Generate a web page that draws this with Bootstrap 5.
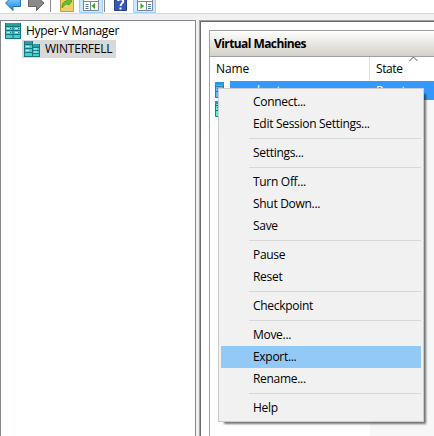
<!DOCTYPE html>
<html lang="en">
<head>
<meta charset="utf-8">
<title>Hyper-V Manager</title>
<link href="https://cdn.jsdelivr.net/npm/bootstrap@5.3.0/dist/css/bootstrap.min.css" rel="stylesheet">
<style>
body{width:434px;height:436px;background:#f0f0f0;color:#000;font:12px/18px "Open Sans","Noto Sans",sans-serif;letter-spacing:-.3px}
svg{display:block;flex:none}
.toolbar{height:14px;background:#fff;border-bottom:1px solid #d9d9d9}
.workspace{height:416px;margin-top:6px}
.tree{width:196px;border:1px solid #828790;border-bottom:0;padding:1px 0 0 4px}
.tree-row{height:18px;line-height:17px}
.tree-row svg{margin-top:1px}
.host{margin-left:17px;width:94px;padding-left:2px}
.tree-label{padding-left:5px}
.host .tree-label{letter-spacing:-.22px}
.picked{background:#d9d9d9}
.main-pane{margin-left:3px;border-left:1px solid #a0a0a0;border-top:1px solid #a0a0a0;padding:9px 0 0 9px;box-shadow:inset 1px 1px #696969}
.vm{border-left:1px solid #a0a0a0;border-top:1px solid #a0a0a0}
.vm-title{height:26px;border-bottom:1px solid #a0a0a0;background:linear-gradient(#fff,#d4d0c8);padding-left:4px;line-height:25px;letter-spacing:-.58px}
.cols{height:24px;line-height:24px;letter-spacing:-.1px}
.name-col{width:160px;border-right:1px solid #e0e0e0;padding-left:6px}
.state-col{padding-left:6px;letter-spacing:-.4px}
.vm-row{height:19px}
.ico{width:20px;padding:1px 0 0 5px}
.sel{background:#3399ff;color:#fff;line-height:19px}
.sel-name{width:140px;padding-left:7px}
.sel-state{padding-left:6px}
.rest-name{width:160px;padding:1px 0 0 5px}
.rest{background:#f7f7f7}
.menu{position:absolute;left:218px;top:88px;width:206px;height:334px;background:#f1f1f1;border:1px solid #ccc;padding:2px;box-shadow:4px 4px 2px -2px rgba(0,0,0,.55)}
.cmd{height:22px;line-height:21px;padding-left:32px;white-space:nowrap}
.hot{background:#91c9f7}
.rule{height:1px;margin:3px 0 3px 28px;background:#d7d7d7}
.sort{position:absolute;left:409px;top:56px}
</style>
<script src="https://cdn.jsdelivr.net/npm/bootstrap@5.3.0/dist/js/bootstrap.bundle.min.js"></script>
</head>
<body class="overflow-hidden position-relative">
<div class="toolbar overflow-hidden">
<svg width="170" height="13">
<defs><linearGradient id="blue" x2="0" y2="1"><stop stop-color="#8fd6ff"/><stop offset="1" stop-color="#1c86e0"/></linearGradient></defs>
<path d="M5.5 3 13-4v3.500h7.500v7H13v4z" fill="url(#blue)" stroke="#2272b8"/>
<path d="M44 3 36.500-4v3.500h-8v7h8v4z" fill="#8a8a8a" stroke="#666"/>
<path d="M50.500 0v12M104.500 0v12" stroke="#8c8c8c"/>
<path d="M60.500-1h13v12.500h-13z" fill="#f0cf6c" stroke="#c79a3c"/>
<path d="M62 8c0-5 2-7 5-7v-3l5 3-3 4-2-1c-2 0-3 2-5 4z" fill="#5fc32a" stroke="#3c9317" stroke-width=".7"/>
<path d="M79.500-1h23v13.500h-23zM133.500-1h22v13.500h-22z" fill="#cce8ff" stroke="#99d1ff"/>
<path d="M83.500-1h15v11.500h-15zM137.500-1h15v11.500h-15z" fill="#fff" stroke="#7d8794"/>
<path d="M84 1.500h14M138 1.500h14M90.500 2v8M146.500 2v8" stroke="#7d8794"/>
<path d="M85.500 4.500h3M85.500 6.500h3M85.500 8.500h3M148 4.500h3M148 6.500h3M148 8.500h3" stroke="#4b79b5"/>
<path d="M95 3v6l-3.500-3zM140.500 3v6l3.500-3z" fill="#38ab22"/>
<path d="M114.500-1h12v11.500h-12z" fill="#3659b5" stroke="#243e87"/>
<path d="M118 1c1-3 6-2 5 1-1 2-2 1.500-2.500 4M120.500 7.500v2" stroke="#fff" stroke-width="2" fill="none"/>
</svg>
</div>
<div class="workspace d-flex">
<div class="tree bg-white flex-shrink-0">
<div class="tree-row d-flex">
<svg width="16" height="16"><path fill="#42cfd2" d="M0 0h16v16H0z"/><path fill="#2b9da3" d="M0 0h16v3H0z"/><path stroke="#16777d" fill="none" d="M.5 0v16M15.500 0v16M0 15.500h16M8 3v12M0 3.500h16M1 7.500h14M1 11.500h14"/><path stroke="#b5ffff" d="M2 5.500h3M10 5.500h3M2 9.500h3M10 9.500h3"/><path stroke="#16777d" d="M5 5.500h1M13 5.500h1M5 9.500h1M13 9.500h1"/></svg>
<span class="tree-label">Hyper-V Manager</span></div>
<div class="tree-row host picked d-flex">
<svg width="16" height="16"><path fill="#42cfd2" d="M0 0h9v16H0zM9 4h7v12H9z"/><path fill="#2b9da3" d="M0 0h9v3H0zM9 3h7v3H9z"/><path stroke="#16777d" fill="none" d="M.5 0v16M8.500 0v16M15.500 3v13M0 15.500h16M0 3.500h9M1 7.500h7M1 11.500h7M9 6.500h7M9 9.500h6M9 12.500h6"/><path stroke="#b5ffff" d="M2 5.500h3M2 9.500h3M10 8h3M10 11h3"/></svg>
<span class="tree-label">WINTERFELL</span></div>
</div>
<div class="main-pane bg-white flex-grow-1">
<div class="vm h-100 d-flex flex-column">
<div class="vm-title fw-bold">Virtual Machines</div>
<div class="cols d-flex"><div class="name-col">Name</div><div class="state-col">State</div></div>
<div class="vm-row d-flex">
<div class="ico"><svg width="9" height="16"><path fill="#5dbcf5" stroke="#2280b8" d="M.5.5h8v15h-8z"/><path fill="#269bd4" d="M0 0h9v3H0z"/><path stroke="#2280b8" d="M0 4.500h9M2 6.500h2M1 9.500h7"/></svg></div>
<div class="sel flex-grow-1 d-flex"><div class="sel-name">vm-host</div><div class="sel-state">Reset</div></div></div>
<div class="d-flex flex-grow-1"><div class="rest-name"><svg width="9" height="16"><path fill="#67e3df" stroke="#14858b" d="M.5.5h8v15h-8z"/><path fill="#239ba0" d="M0 0h9v3H0z"/><path stroke="#14777d" d="M0 4.500h9M2 6.500h2M1 9.500h7"/></svg></div><div class="rest flex-grow-1"></div></div>
</div></div></div>
<svg class="sort" width="10" height="6"><path d="M.5 5 4.500 1 8.500 5" fill="none" stroke="#555"/></svg>
<div class="menu">
<div class="cmd">Connect...</div><div class="cmd">Edit Session Settings...</div><div class="rule"></div>
<div class="cmd">Settings...</div><div class="rule"></div>
<div class="cmd">Turn Off...</div><div class="cmd">Shut Down...</div><div class="cmd">Save</div><div class="rule"></div>
<div class="cmd">Pause</div><div class="cmd">Reset</div><div class="rule"></div>
<div class="cmd">Checkpoint</div><div class="rule"></div>
<div class="cmd">Move...</div><div class="cmd hot">Export...</div><div class="cmd">Rename...</div><div class="rule"></div>
<div class="cmd">Help</div>
</div>
</body>
</html>
